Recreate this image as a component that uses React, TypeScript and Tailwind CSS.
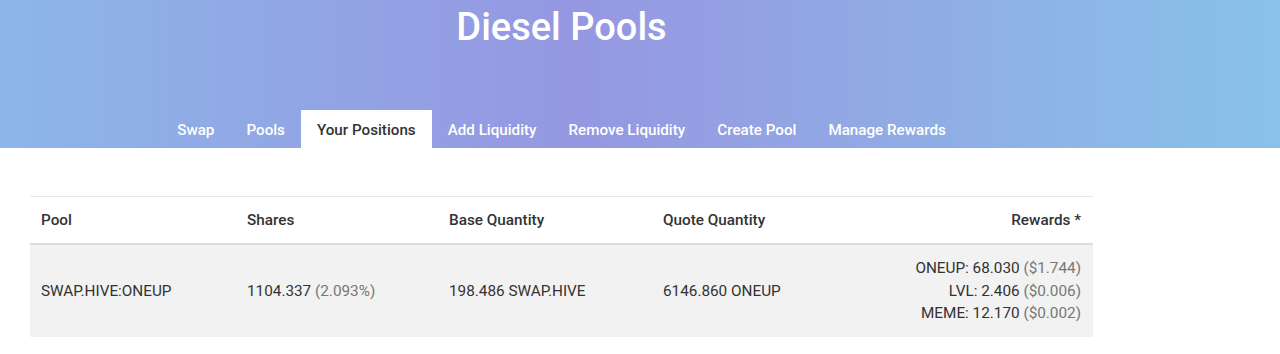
const TABS = ["Swap", "Pools", "Your Positions", "Add Liquidity", "Remove Liquidity", "Create Pool", "Manage Rewards"];

const REWARDS = [
  { label: "ONEUP: 68.030", usd: "($1.744)" },
  { label: "LVL: 2.406", usd: "($0.006)" },
  { label: "MEME: 12.170", usd: "($0.002)" },
];

export default function App() {
  return (
    <div className="min-h-[354px] w-full bg-white font-['Roboto',sans-serif] text-[#333]">
      <header className="h-[148px] w-full bg-gradient-to-r from-[#8cb6e9] via-[#9597e1] via-45% to-[#88c2e9]">
        <div className="flex h-full w-[1123px] flex-col items-center justify-between">
          <h1 className="pt-[5px] text-[38px] font-medium leading-[45px] text-white">Diesel Pools</h1>
          <nav className="flex">
            {TABS.map((t) => (
              <a
                key={t}
                href="#"
                className={
                  t === "Your Positions"
                    ? "h-[38px] bg-white px-[16px] text-[15.2px] font-medium leading-[40px] text-[#333]"
                    : "h-[38px] px-[16px] text-[15.2px] font-medium leading-[40px] text-white"
                }
              >
                {t}
              </a>
            ))}
          </nav>
        </div>
      </header>

      <main className="w-[1123px] px-[30px] pt-[48px]">
        <table className="w-full border-collapse text-[15.3px]">
          <thead>
            <tr className="border-t border-b-2 border-t-[#e6e6e6] border-b-[#dcdcdc] font-medium">
              <th className="w-[206px] px-[11px] py-[12px] text-left font-medium leading-[22px]">Pool</th>
              <th className="w-[202px] px-[11px] py-[12px] text-left font-medium leading-[22px]">Shares</th>
              <th className="w-[214px] px-[11px] py-[12px] text-left font-medium leading-[22px]">Base Quantity</th>
              <th className="px-[11px] py-[12px] text-left font-medium leading-[22px]">Quote Quantity</th>
              <th className="px-[12px] py-[12px] text-right font-medium leading-[22px]">Rewards *</th>
            </tr>
          </thead>
          <tbody>
            <tr className="bg-[#f2f2f2]">
              <td className="px-[11px] py-[12px] leading-[22px]">SWAP.HIVE:ONEUP</td>
              <td className="px-[11px] py-[12px] leading-[22px]">
                1104.337 <span className="text-[#777]">(2.093%)</span>
              </td>
              <td className="px-[11px] py-[12px] leading-[22px]">198.486 SWAP.HIVE</td>
              <td className="px-[11px] py-[12px] leading-[22px]">6146.860 ONEUP</td>
              <td className="px-[12px] py-[12px] text-right leading-[22.5px]">
                {REWARDS.map((r) => (
                  <div key={r.label}>
                    {r.label} <span className="text-[#777]">{r.usd}</span>
                  </div>
                ))}
              </td>
            </tr>
          </tbody>
        </table>
      </main>
    </div>
  );
}
